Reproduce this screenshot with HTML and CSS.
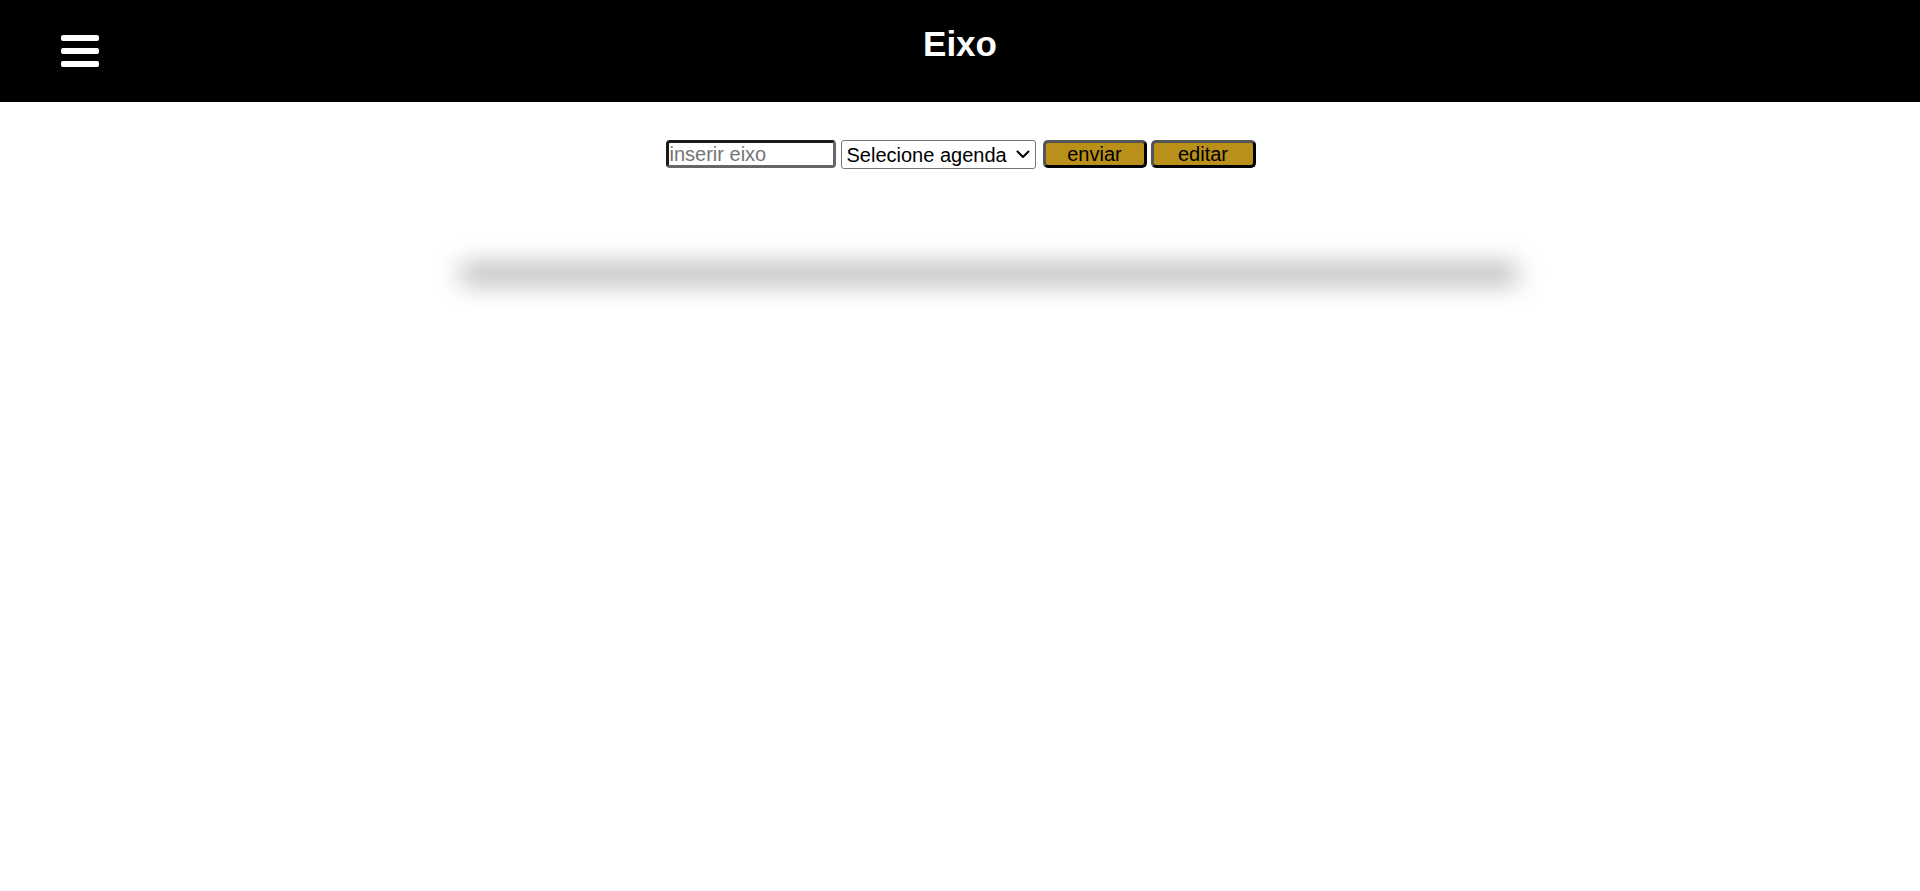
FILE: index.html
```html
<!DOCTYPE html>
<html lang="pt">
<head>
<meta charset="utf-8">
<title>Eixo</title>
<link rel="stylesheet" href="styles.css">
</head>
<body>
<header class="topbar">
  <div class="menu-btn" aria-label="menu">
    <span class="bar"></span>
    <span class="bar"></span>
    <span class="bar"></span>
  </div>
  <h1 class="title">Eixo</h1>
</header>
<main class="content">
  <form class="eixo-form">
    <input class="field" type="text" placeholder="inserir eixo">
    <span class="picker-wrap">
      <select class="picker">
        <option>Selecione agenda</option>
      </select>
      <svg class="chevron" width="14" height="9" viewBox="0 0 14 9" aria-hidden="true">
        <path d="M1.5 1.5 L7 7 L12.5 1.5" fill="none" stroke="#000" stroke-width="2" stroke-linecap="round" stroke-linejoin="round"/>
      </svg>
    </span>
    <button class="btn btn-send" type="button">enviar</button>
    <button class="btn btn-edit" type="button">editar</button>
  </form>
  <div class="list-shadow"></div>
</main>
</body>
</html>
```

FILE: styles.css
```css
html, body {
  margin: 0;
  padding: 0;
  background: #ffffff;
  font-family: "Liberation Sans", Arial, sans-serif;
}

body {
  min-height: 100vh;
}

.topbar {
  height: 102px;
  background: #000000;
  position: relative;
  display: flex;
  justify-content: center;
  align-items: flex-start;
}

.menu-btn {
  position: absolute;
  left: 61px;
  top: 35px;
  width: 38px;
  display: flex;
  flex-direction: column;
  gap: 7px;
}

.bar {
  display: block;
  height: 6px;
  background: #ffffff;
  border-radius: 2px;
}

.title {
  margin: 0;
  padding-top: 24px;
  color: #ffffff;
  font-size: 35px;
  font-weight: bold;
  line-height: 40px;
}

.content {
  display: flex;
  flex-direction: column;
  padding-bottom: 200px;
}

.eixo-form {
  margin-top: 38px;
  display: flex;
  justify-content: center;
  align-items: flex-start;
  padding-left: 1px;
}

.field {
  box-sizing: border-box;
  width: 170px;
  height: 28px;
  margin: 0 5px 0 0;
  padding: 1px 1px 0;
  font-family: "Liberation Sans", Arial, sans-serif;
  font-size: 20px;
  color: #000;
  border: 3px solid #666;
  border-top-color: #1a1a1a;
  border-left-color: #1a1a1a;
  border-radius: 4px;
  outline: none;
}

.field::placeholder {
  color: #757575;
}

.picker-wrap {
  position: relative;
  display: block;
  margin: 0 7px 0 0;
}

.picker {
  box-sizing: border-box;
  display: block;
  width: 195px;
  height: 29px;
  margin: 0;
  padding: 0 20px 0 5px;
  appearance: none;
  -webkit-appearance: none;
  font-family: "Liberation Sans", Arial, sans-serif;
  font-size: 20px;
  color: #000;
  background: #fff;
  border: 1px solid #767676;
  border-radius: 3px;
}

.chevron {
  position: absolute;
  right: 6px;
  top: 10px;
  pointer-events: none;
}

.btn {
  box-sizing: border-box;
  width: 104px;
  height: 28px;
  margin: 0 4px 0 0;
  padding: 0;
  font-family: "Liberation Sans", Arial, sans-serif;
  font-size: 20px;
  line-height: 20px;
  color: #000;
  background: #b8901a;
  border: 3px solid #000;
  border-top-color: #555;
  border-left-color: #555;
  border-radius: 5px;
}

.btn-edit {
  width: 105px;
  margin-right: 0;
}

.list-shadow {
  width: 1056px;
  height: 18px;
  margin: 96px 0 0 461px;
  background: rgba(0, 0, 0, 0.33);
  filter: blur(13px);
}
```
